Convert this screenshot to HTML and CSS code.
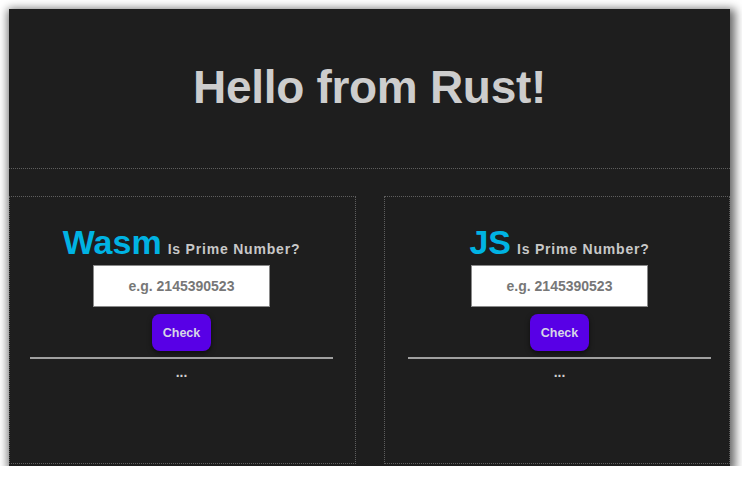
FILE: index.html
```html
<!DOCTYPE html>
<html lang="en">
<head>
<meta charset="utf-8">
<title>Hello from Rust!</title>
<link rel="stylesheet" href="styles.css">
</head>
<body>
<div class="window">
  <header class="header">
    <h1 class="title">Hello from Rust!</h1>
  </header>
  <main class="panels">
    <section class="panel">
      <h2 class="heading"><span class="brand">Wasm</span><span class="sub">Is Prime Number?</span></h2>
      <input class="num" type="text" placeholder="e.g. 2145390523">
      <button class="check">Check</button>
      <hr class="rule">
      <div class="result">...</div>
    </section>
    <section class="panel panel-js">
      <h2 class="heading"><span class="brand">JS</span><span class="sub">Is Prime Number?</span></h2>
      <input class="num" type="text" placeholder="e.g. 2145390523">
      <button class="check">Check</button>
      <hr class="rule">
      <div class="result">...</div>
    </section>
  </main>
</div>
</body>
</html>
```

FILE: styles.css
```css
html, body {
  margin: 0;
  padding: 0;
  background: #ffffff;
}

body {
  font-family: "Liberation Sans", Arial, sans-serif;
  overflow: hidden;
}

.window {
  width: 721px;
  height: 457px;
  margin: 9px 0 0 9px;
  background: #1e1e1e;
  box-shadow: 2px 3px 9px 3px rgba(0, 0, 0, 0.6);
  overflow: hidden;
}

.header {
  box-sizing: border-box;
  height: 160px;
  padding-bottom: 4px;
  border-bottom: 1px dotted #5e5e5e;
  display: flex;
  align-items: center;
  justify-content: center;
}

.title {
  margin: 0;
  font-size: 46px;
  font-weight: bold;
  color: #cdcdcd;
  letter-spacing: -0.3px;
}

.panels {
  display: grid;
  grid-template-columns: 347px 346px;
  column-gap: 28px;
  padding-top: 27px;
}

.panel {
  box-sizing: border-box;
  height: 268px;
  border: 1px dotted #5e5e5e;
  display: flex;
  flex-direction: column;
  align-items: center;
  padding-top: 25px;
  padding-right: 2px;
}

.panel-js {
  padding-right: 0;
  padding-left: 5px;
}

.heading {
  margin: 0;
  height: 40px;
  line-height: 40px;
  font-weight: bold;
  white-space: nowrap;
}

.brand {
  font-size: 34px;
  color: #00b3e3;
}

.sub {
  font-size: 14px;
  color: #c8c8c8;
  letter-spacing: 0.8px;
  margin-left: 6px;
}

.num {
  box-sizing: border-box;
  width: 177px;
  height: 42px;
  margin-top: 3px;
  border: 1px solid #8a8a8a;
  background: #ffffff;
  font-family: "Liberation Sans", Arial, sans-serif;
  font-size: 14px;
  font-weight: bold;
  text-align: center;
  color: #333;
  outline: none;
}

.num::placeholder {
  color: #777777;
}

.check {
  box-sizing: border-box;
  width: 59px;
  height: 37px;
  margin-top: 7px;
  border: none;
  border-radius: 8px;
  background: #5800e6;
  color: #d6d6e6;
  font-family: "Liberation Sans", Arial, sans-serif;
  font-size: 12.5px;
  font-weight: bold;
  box-shadow: 0 2px 5px rgba(0, 0, 0, 0.55);
}

.rule {
  width: 303px;
  height: 2px;
  margin: 6px 0 0 0;
  border: none;
  background: #a0a0a0;
}

.result {
  margin-top: 5px;
  line-height: 16px;
  font-size: 14px;
  font-weight: bold;
  color: #cfcfcf;
}
```
